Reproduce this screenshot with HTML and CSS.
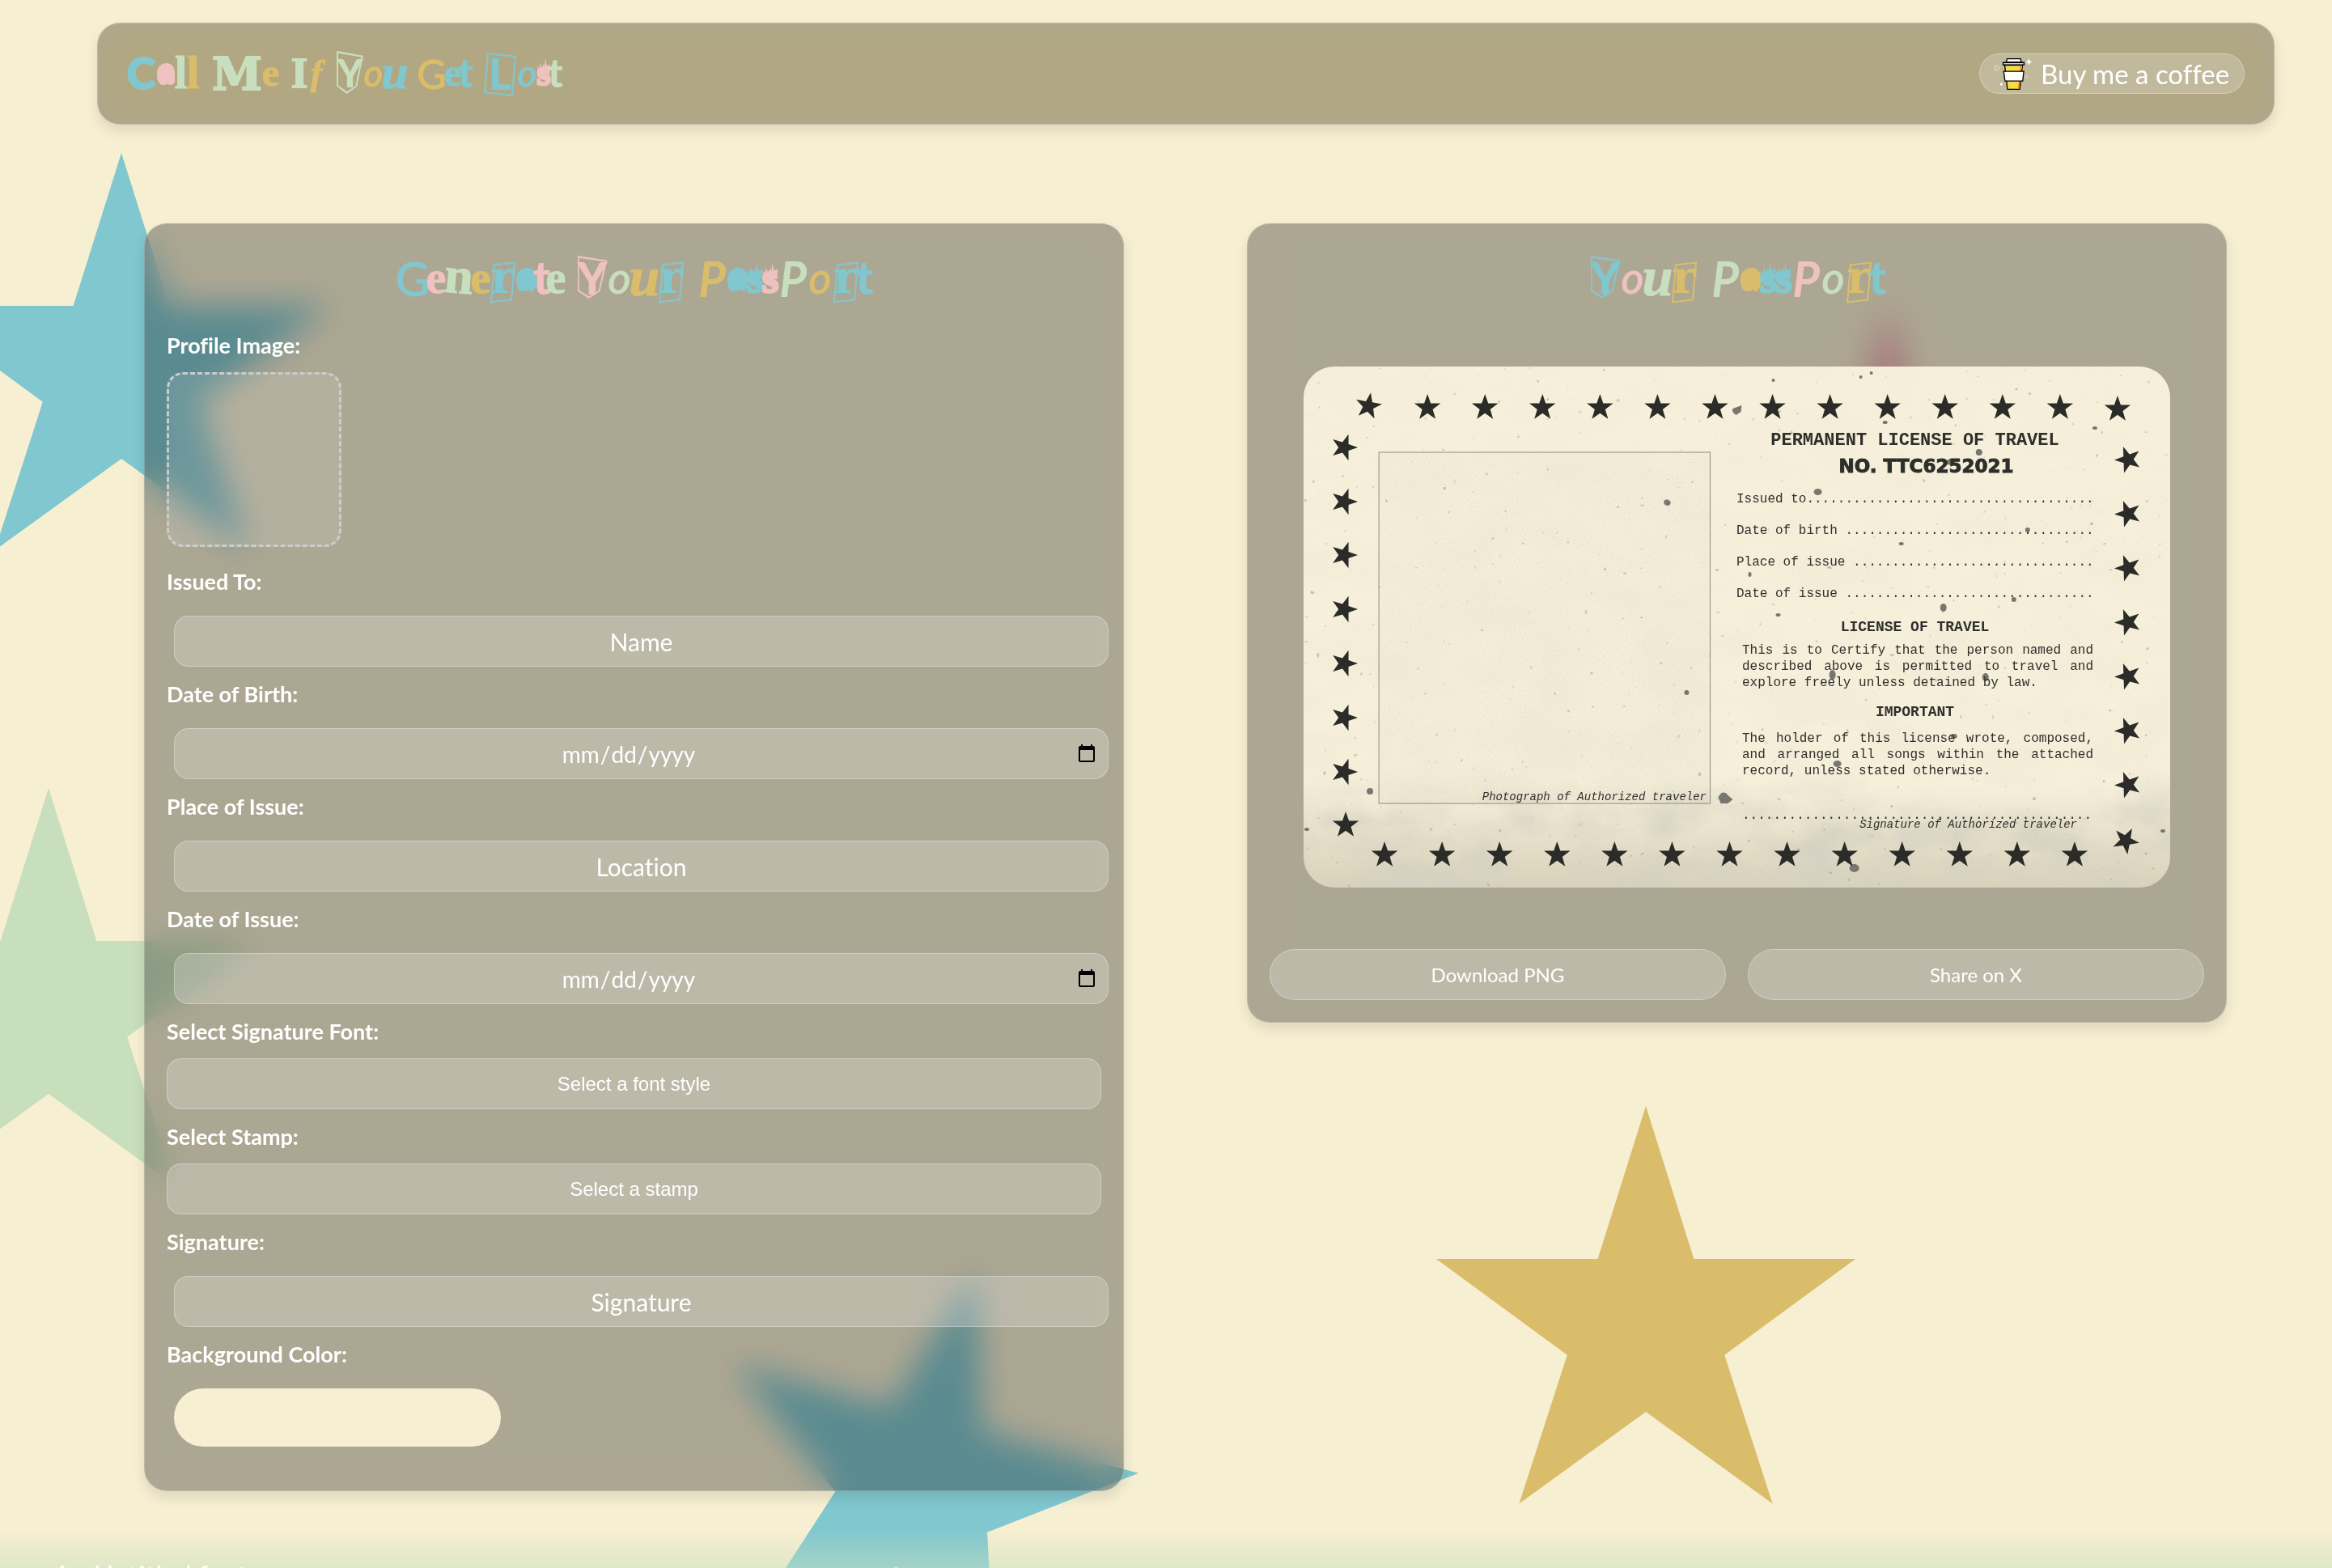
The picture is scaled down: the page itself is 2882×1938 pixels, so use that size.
FILE: index.html
```html
<!DOCTYPE html>
<html lang="en">
<head>
<meta charset="utf-8">
<title>Call Me If You Get Lost</title>
<link rel="stylesheet" href="styles.css">
</head>
<body>
<div class="page">
  <div class="backdrop" aria-hidden="true">
    <i class="star star-blue"></i>
    <i class="star star-green"></i>
    <i class="star star-pink"></i>
    <i class="star star-gold"></i>
    <i class="star star-tilted"></i>
  </div>

  <header class="navbar">
    <h1 class="ransom ransom-nav">
      <span class="word"><span class="l-c blue">C</span><span class="l-a pink">a</span><span class="l-l green">l</span><span class="l-l gold">l</span></span>
      <span class="word"><span class="l-m green">M</span><span class="l-e gold">e</span></span>
      <span class="word"><span class="l-i green">I</span><span class="l-f gold">f</span></span>
      <span class="word"><span class="l-y green">Y</span><span class="l-o gold">o</span><span class="l-u blue">u</span></span>
      <span class="word"><span class="l-g gold">G</span><span class="l-e blue">e</span><span class="l-t blue">t</span></span>
      <span class="word"><span class="l-lb blue">L</span><span class="l-o blue">o</span><span class="l-s pink">s</span><span class="l-t green">t</span></span>
    </h1>
    <a class="coffee" href="#coffee">
      <svg class="cup" viewBox="190 145 145 125" aria-hidden="true">
        <circle cx="204" cy="187" r="8" fill="none" stroke="#d3ccb6" stroke-width="7"/>
        <circle cx="317" cy="219" r="5" fill="#d3ccb6"/>
        <circle cx="221" cy="247" r="5" fill="#fff"/>
        <path d="M324 155v18M315 164h18" stroke="#fff" stroke-width="6"/>
        <path d="M234 176h66l-10 90h-46z" fill="#f9dc45" stroke="#000" stroke-width="4"/>
        <path d="M292 178h7l-3 22h-7zM286 236h5l-4 28h-5z" fill="#f2902f"/>
        <path d="M230 199h75l-4 36h-66z" fill="#fff" stroke="#000" stroke-width="4"/>
        <path d="M243 152h50l3 13h-57z" fill="#fff" stroke="#000" stroke-width="4"/>
        <path d="M228 166h78v9h-78z" fill="#ccc" stroke="#000" stroke-width="4"/>
      </svg>
      <span>Buy me a coffee</span>
    </a>
  </header>

  <main class="columns">
    <form class="card form">
      <h2 class="ransom">
        <span class="word"><span class="l-g blue">G</span><span class="l-e pink">e</span><span class="l-n green">n</span><span class="l-e gold">e</span><span class="l-r blue">r</span><span class="l-a blue">a</span><span class="l-t pink">t</span><span class="l-e green">e</span></span>
        <span class="word"><span class="l-y pink">Y</span><span class="l-o green">o</span><span class="l-u gold">u</span><span class="l-r blue">r</span></span>
        <span class="word"><span class="l-p gold">P</span><span class="l-a blue">a</span><span class="l-s blue">s</span><span class="l-s pink">s</span><span class="l-p green">P</span><span class="l-o gold">o</span><span class="l-r blue">r</span><span class="l-t blue">t</span></span>
      </h2>
      <div class="field field-photo">
        <label for="photo">Profile Image:</label>
        <input class="drop" id="photo" type="file" accept="image/*">
      </div>
      <div class="field">
        <label for="name">Issued To:</label>
        <input class="control" id="name" type="text" placeholder="Name">
      </div>
      <div class="field">
        <label for="birth">Date of Birth:</label>
        <input class="control" id="birth" type="date">
      </div>
      <div class="field">
        <label for="place">Place of Issue:</label>
        <input class="control" id="place" type="text" placeholder="Location">
      </div>
      <div class="field">
        <label for="issued">Date of Issue:</label>
        <input class="control" id="issued" type="date">
      </div>
      <div class="field">
        <label for="font">Select Signature Font:</label>
        <select class="picker" id="font"><option>Select a font style</option></select>
      </div>
      <div class="field">
        <label for="stamp">Select Stamp:</label>
        <select class="picker" id="stamp"><option>Select a stamp</option></select>
      </div>
      <div class="field">
        <label for="sign">Signature:</label>
        <input class="control" id="sign" type="text" placeholder="Signature">
      </div>
      <div class="field">
        <label for="color">Background Color:</label>
        <input class="swatch" id="color" type="color" value="#f7efd2">
      </div>
    </form>

    <section class="card">
      <h2 class="ransom">
        <span class="word"><span class="l-y blue">Y</span><span class="l-o pink">o</span><span class="l-u green">u</span><span class="l-r gold">r</span></span>
        <span class="word"><span class="l-p green">P</span><span class="l-a gold">a</span><span class="l-s blue">s</span><span class="l-s blue">s</span><span class="l-p pink">P</span><span class="l-o green">o</span><span class="l-r gold">r</span><span class="l-t blue">t</span></span>
      </h2>
      <article class="passport">
        <svg class="paper" viewBox="0 0 1070 644" preserveAspectRatio="none" aria-hidden="true">
          <defs>
            <path id="s" d="M0-17L4-5.500H16.200L6.500 2L10 13.800L0 6.800L-10 13.800L-6.500 2L-16.200-5.500H-4Z"/>
            <linearGradient id="fade" x1="0" y1="0" x2="0" y2="1">
              <stop offset="0" stop-color="#fff" stop-opacity=".04"/>
              <stop offset=".78" stop-color="#fff" stop-opacity=".1"/>
              <stop offset=".88" stop-color="#fff" stop-opacity=".8"/>
              <stop offset="1" stop-color="#fff"/>
            </linearGradient>
            <linearGradient id="bottom" x1="0" y1="0" x2="0" y2="1">
              <stop offset=".8" stop-color="#b5ae94" stop-opacity="0"/>
              <stop offset="1" stop-color="#b5ae94" stop-opacity=".45"/>
            </linearGradient>
            <mask id="low"><rect width="1070" height="644" fill="url(#fade)"/></mask>
            <filter id="smudge" x="0" y="0" width="1" height="1">
              <feTurbulence type="fractalNoise" baseFrequency=".012 .018" numOctaves="5" seed="8"/>
              <feColorMatrix values="0 0 0 0 .66  0 0 0 0 .64  0 0 0 0 .54  2.4 0 0 0 -.9"/>
            </filter>
            <filter id="grain" x="0" y="0" width="1" height="1">
              <feTurbulence type="fractalNoise" baseFrequency=".5" numOctaves="2" seed="3"/>
              <feColorMatrix values="0 0 0 0 .5  0 0 0 0 .48  0 0 0 0 .38  .5 0 0 0 -.16"/>
            </filter>
            <filter id="specks" x="0" y="0" width="1" height="1">
              <feTurbulence type="fractalNoise" baseFrequency=".13" numOctaves="2" seed="21"/>
              <feColorMatrix values="0 0 0 0 .3  0 0 0 0 .3  0 0 0 0 .32  9 0 0 0 -6.900"/>
            </filter>
          </defs>
          <rect width="1070" height="644" fill="#f6efda"/>
          <rect width="1070" height="644" fill="url(#bottom)"/>
          <g mask="url(#low)"><rect width="1070" height="644" filter="url(#smudge)"/></g>
          <rect x="93" y="106" width="409" height="434" filter="url(#grain)" opacity=".6"/>
          <rect width="1070" height="644" filter="url(#specks)" opacity=".6"/>
          <rect x="93" y="106" width="409" height="434" fill="none" stroke="#8f8b7b"/>
          <g fill="#77776f">
            <path d="M445 166q4-4 8 1q1 5-4 5q-5-1-4-6zM530 52l11-4-1 8-6 4q-6-4-4-8z"/>
            <path d="M512 532l4-5q5-2 8 3l6 5-6 5-9 0z"/><ellipse cx="82" cy="525" rx="4" ry="4"/>
            <ellipse cx="635" cy="155" rx="5" ry="4"/><ellipse cx="799" cy="118" rx="5" ry="4"/>
            <ellipse cx="834" cy="106" rx="4" ry="4"/><ellipse cx="653" cy="381" rx="4" ry="6"/>
            <ellipse cx="842" cy="384" rx="4" ry="5"/><ellipse cx="790" cy="298" rx="4" ry="5"/>
            <ellipse cx="877" cy="288" rx="3" ry="3"/><ellipse cx="659" cy="491" rx="5" ry="4"/>
            <ellipse cx="680" cy="620" rx="6" ry="5"/><ellipse cx="803" cy="457" rx="4" ry="3"/>
            <ellipse cx="473" cy="403" rx="3" ry="3"/><ellipse cx="718" cy="69" rx="3" ry="2"/>
            <ellipse cx="894" cy="202" rx="3" ry="3"/><ellipse cx="551" cy="257" rx="2" ry="3"/>
            <ellipse cx="738" cy="219" rx="3" ry="2"/><ellipse cx="1061" cy="574" rx="3" ry="2"/>
            <ellipse cx="4" cy="572" rx="3" ry="2"/><ellipse cx="977" cy="76" rx="3" ry="2"/>
            <ellipse cx="688" cy="13" rx="2" ry="2"/><ellipse cx="701" cy="8" rx="2" ry="2"/>
            <ellipse cx="580" cy="17" rx="2" ry="2"/><ellipse cx="586" cy="307" rx="3" ry="2"/>
          </g>
          <g fill="#2b2b28">
            <use href="#s" transform="translate(80 49) rotate(10)"/>
            <use href="#s" x="153" y="51"/><use href="#s" x="224" y="51"/><use href="#s" x="295" y="51"/><use href="#s" x="366" y="51"/><use href="#s" x="437" y="51"/><use href="#s" x="508" y="51"/><use href="#s" x="579" y="51"/><use href="#s" x="650" y="51"/><use href="#s" x="721" y="51"/><use href="#s" x="792" y="51"/><use href="#s" x="863" y="51"/><use href="#s" x="934" y="51"/><use href="#s" x="1005" y="53"/>
            <use href="#s" transform="translate(50 100) rotate(90)"/><use href="#s" transform="translate(50 167) rotate(90)"/><use href="#s" transform="translate(50 233) rotate(90)"/><use href="#s" transform="translate(50 300) rotate(90)"/><use href="#s" transform="translate(50 367) rotate(90)"/><use href="#s" transform="translate(50 434) rotate(90)"/><use href="#s" transform="translate(50 501) rotate(90)"/><use href="#s" x="52" y="567"/>
            <use href="#s" transform="translate(1018 115) rotate(-92)"/><use href="#s" transform="translate(1018 182) rotate(-92)"/><use href="#s" transform="translate(1018 249) rotate(-92)"/><use href="#s" transform="translate(1018 316) rotate(-92)"/><use href="#s" transform="translate(1018 383) rotate(-92)"/><use href="#s" transform="translate(1018 450) rotate(-92)"/><use href="#s" transform="translate(1018 517) rotate(-92)"/><use href="#s" transform="translate(1015 586) rotate(28)"/>
            <use href="#s" x="100" y="604"/><use href="#s" x="171" y="604"/><use href="#s" x="242" y="604"/><use href="#s" x="313" y="604"/><use href="#s" x="384" y="604"/><use href="#s" x="455" y="604"/><use href="#s" x="526" y="604"/><use href="#s" x="597" y="604"/><use href="#s" x="668" y="604"/><use href="#s" x="739" y="604"/><use href="#s" x="810" y="604"/><use href="#s" x="881" y="604"/><use href="#s" x="952" y="604"/>
          </g>
        </svg>
        <p class="photo-note">Photograph of Authorized traveler</p>
        <div class="license">
          <h3 class="license-title">PERMANENT LICENSE OF TRAVEL</h3>
          <p class="license-no">NO. TTC6252021</p>
          <p class="entry">Issued to.....................................</p>
          <p class="entry">Date of birth ................................</p>
          <p class="entry">Place of issue ...............................</p>
          <p class="entry">Date of issue ................................</p>
          <h4 class="clause-title">LICENSE OF TRAVEL</h4>
          <p class="clause">This is to Certify that the person named and described above is permitted to travel and explore freely unless detained by law.</p>
          <h4 class="clause-title clause-second">IMPORTANT</h4>
          <p class="clause clause-last">The holder of this license wrote, composed, and arranged all songs within the attached record, unless stated otherwise.</p>
          <p class="sign-line">.............................................</p>
          <p class="sign-note">Signature of Authorized traveler</p>
        </div>
      </article>
      <div class="actions">
        <button type="button">Download PNG</button>
        <button type="button">Share on X</button>
      </div>
    </section>
  </main>

  <footer class="footer"><p>An Untitled font</p></footer>
</div>
</body>
</html>
```
FILE: styles.css
```css
* { box-sizing: border-box; }

:root {
  --cream: #f7efd2;
  --blue: #81c7cf;
  --pink: #efc1c0;
  --green: #c8dfbd;
  --gold: #dabd6a;
  --glass: rgba(255, 255, 255, .2);
}

body {
  margin: 0; background: var(--cream); color: #fff;
  font-family: Lato, sans-serif; font-variant-ligatures: none;
}
h1, h2, h3, h4, p { margin: 0; font-weight: normal; }

.page { position: relative; height: 100vh; overflow: hidden auto; scrollbar-width: none; }

/* Stars scattered behind the page */
.backdrop { position: absolute; inset: 0; overflow: hidden; }
.star {
  position: absolute; width: 540px; height: 540px;
  clip-path: polygon(50% 0, 61% 35%, 98% 35%, 68% 57%, 79% 91%, 50% 70%, 21% 91%, 32% 57%, 2% 35%, 39% 35%);
}
.star-blue { left: -120px; top: 189px; background: var(--blue); }
.star-green { left: -210px; top: 974px; background: var(--green); }
.star-pink { left: 2063px; top: 378px; background: #efaeb4; }
.star-gold { left: 1764px; top: 1367px; background: var(--gold); }
.star-tilted { left: 866px; top: 1562px; background: var(--blue); transform: rotate(15deg); }

/* Header */
.navbar {
  position: relative; display: flex; align-items: center; justify-content: space-between;
  height: 126px; margin: 28px 71px 0 120px; padding: 0 36px 0 34px;
  border: 1px solid rgba(255, 255, 255, .2); border-radius: 28px;
  background: rgba(0, 0, 0, .3); backdrop-filter: blur(20px) saturate(180%);
  box-shadow: 0 8px 16px rgba(0, 0, 0, .1);
}
.coffee {
  display: flex; align-items: center; gap: 11px; width: 328px; height: 50px; padding-left: 16px;
  border: 1px solid rgba(255, 255, 255, .3); border-radius: 25px;
  background: var(--glass); color: #fff; font-size: 33px; line-height: 44px;
  text-decoration: none; white-space: nowrap;
}
.cup { width: 48px; height: 42px; }

/* Cut-out lettering */
.ransom { display: flex; justify-content: center; gap: 16px; height: 80px; font-size: 58px; line-height: 80px; }
.word { display: flex; }
.word span { position: relative; display: flex; justify-content: center; white-space: nowrap; }
.blue { color: var(--blue); }
.pink { color: var(--pink); }
.green { color: var(--green); }
.gold { color: var(--gold); }
.word .l-g { width: 37px; font-family: Lato, sans-serif; -webkit-text-stroke: 1px currentColor; }
.word .l-e { width: 21px; font: bold 56px/78px "Liberation Serif", serif; -webkit-text-stroke: 1px currentColor; }
.word .l-n { width: 34px; font: bold 64px/74px "Liberation Serif", serif; transform: rotate(5deg); -webkit-text-stroke: 1px currentColor; }
.word .l-r { width: 33px; font: bold 56px/76px "DejaVu Serif", serif; }
.word .l-a { width: 25px; font: 900 46px/78px Lato, sans-serif; }
.word .l-t { width: 14px; font: 900 58px/76px Lato, sans-serif; }
.word .l-y { width: 37px; font: 900 56px/78px Lato, sans-serif; }
.word .l-o { width: 30px; font: italic 54px/78px Lato, sans-serif; -webkit-text-stroke: 1px currentColor; }
.word .l-u { width: 32px; font: italic bold 68px/76px "Liberation Serif", serif; -webkit-text-stroke: 1px currentColor; }
.word .l-p { width: 37px; font: italic 58px/80px Lato, sans-serif; -webkit-text-stroke: 2px currentColor; }
.word .l-s { width: 19px; font: bold 52px/80px "Liberation Serif", serif; -webkit-text-stroke: 3px currentColor; }
.l-r::before, .l-lb::before {
  content: ""; position: absolute; inset: 21px 3px 11px 3px;
  border: 2px solid currentColor; transform: skew(-5deg, -6deg);
}
.l-y::before {
  content: ""; position: absolute; inset: 12px 0 15px 0; background: currentColor;
  clip-path: polygon(0 0, 100% 11%, 76% 83%, 38% 100%, 0 82%, 0 0, 6% 5%, 6% 80%, 39% 95%, 71% 81%, 92% 14%, 6% 5%);
}
.l-a::before {
  content: ""; position: absolute; inset: 27px 0 27px 0; background: currentColor;
  border-radius: 14px 12px 4px 10px;
}
/* Flames over the letter */
.l-s::before {
  content: ""; position: absolute; inset: 21px 0 40px 0; background: currentColor;
  clip-path: polygon(5% 100%, 2% 50%, 18% 70%, 20% 30%, 38% 65%, 50% 30%, 58% 55%, 62% 0, 74% 50%, 100% 40%, 90% 100%);
}

.ransom-nav { gap: 15px; font-size: 50px; }
.ransom-nav .l-c { width: 39px; font: 900 54px/78px Lato, sans-serif; -webkit-text-stroke: 2px currentColor; }
.ransom-nav .l-a { width: 22px; font-size: 38px; }
.ransom-nav .l-l { width: 15px; font: bold 56px/78px "Liberation Serif", serif; -webkit-text-stroke: 1px currentColor; }
.ransom-nav .l-m { width: 64px; font: bold 56px/80px "DejaVu Serif", serif; -webkit-text-stroke: 2px currentColor; }
.ransom-nav .l-e { width: 19px; font-size: 48px; }
.ransom-nav .l-i { width: 22px; font: bold 52px/80px "Liberation Serif", serif; -webkit-text-stroke: 2px currentColor; }
.ransom-nav .l-f { width: 20px; font: italic bold 44px/80px "Liberation Serif", serif; -webkit-text-stroke: 1px currentColor; }
.ransom-nav .l-y { width: 33px; font-size: 48px; }
.ransom-nav .l-o { width: 25px; font-size: 46px; }
.ransom-nav .l-u { width: 28px; font-size: 60px; }
.ransom-nav .l-g { width: 33px; }
.ransom-nav .l-t { width: 13px; font-size: 50px; }
.ransom-nav .l-lb { width: 42px; font: 900 54px/80px Lato, sans-serif; }
.ransom-nav .l-s { width: 16px; font-size: 44px; }
.ransom-nav .l-lb::before { inset: 16px 3px 14px 3px; transform: skew(-5deg, 6deg); }

/* Two-card layout */
.columns {
  display: grid; grid-template-columns: 1fr 1fr; align-items: start; gap: 152px;
  margin: 122px 130px 0 178px;
}
.card {
  position: relative; padding: 27px;
  border: 1px solid rgba(255, 255, 255, .2); border-radius: 28px;
  background: rgba(0, 0, 0, .3); backdrop-filter: blur(20px);
  box-shadow: 0 8px 16px rgba(0, 0, 0, .1);
}
.form { padding-bottom: 54px; }
.form .ransom { margin-bottom: 25px; }

.field { display: flex; flex-direction: column; margin-bottom: 16px; }
.field:last-child { margin-bottom: 0; }
.field-photo { margin-bottom: 25px; }
.field label { margin-bottom: 15px; font-size: 27px; font-weight: bold; line-height: 36px; }
.drop {
  width: 216px; height: 216px; border: 3px dashed #ccc; border-radius: 20px;
  background: rgba(255, 255, 255, .1); color: transparent; font-size: 0;
}
.drop::file-selector-button { display: none; }
.control, .picker {
  width: 100%; height: 63px; border: 1px solid rgba(255, 255, 255, .3); border-radius: 18px;
  background: var(--glass); color: #fff; text-align: center;
}
.control { margin: 9px 0 0 9px; padding: 0 13px; font: 30px Lato, sans-serif; font-variant-ligatures: none; }
.control::placeholder { color: #fff; opacity: 1; }
.control[type="date"] { padding-left: 8px; font-size: 28px; }
.control::-webkit-calendar-picker-indicator { width: 26px; height: 26px; padding: 0; }
.picker { appearance: none; font: 24px "Liberation Sans", sans-serif; text-align-last: center; }
.picker option { color: #222; }
.swatch {
  width: 404px; height: 72px; margin: 9px 0 0 9px; padding: 0; overflow: hidden;
  border: 0; border-radius: 36px; background: var(--cream);
}
.swatch::-webkit-color-swatch-wrapper { padding: 0; }
.swatch::-webkit-color-swatch { border: 0; }

/* Passport preview */
.passport {
  position: relative; display: flex; justify-content: space-between;
  height: 644px; margin: 69px 42px 76px; padding: 79px 95px 0 93px;
  border-radius: 38px; overflow: hidden; color: #2e2e2b;
  font: bold 16px/20px "Liberation Mono", monospace;
}
.paper { position: absolute; inset: 0; width: 100%; height: 100%; }
.passport p, .license { position: relative; }
.photo-note { width: 405px; padding-top: 443px; font-size: 14px; font-style: italic; text-align: right; }
.license { width: 441px; }
.license-title { font-size: 22px; font-weight: bold; line-height: 26px; text-align: center; }
.license-no { margin-top: 3px; padding-left: 28px; font: bold 23px/30px "DejaVu Sans", sans-serif; text-align: center; -webkit-text-stroke: 1px currentColor; }
.entry { margin-bottom: 19px; white-space: pre; }
.license-no + .entry { margin-top: 16px; }
.clause-title { margin-top: 2px; font-size: 18px; font-weight: bold; line-height: 24px; text-align: center; }
.clause { margin: 7px 0 0 7px; text-align: justify; }
.clause-second { margin-top: 14px; }
.clause-last { margin-top: 11px; }
.sign-line { margin: 35px 0 0 7px; }
.sign-note { margin-top: -6px; padding-right: 20px; font-size: 14px; font-style: italic; line-height: 14px; text-align: right; }

.actions { display: grid; grid-template-columns: 1fr 1fr; gap: 27px; }
.actions button {
  height: 63px; border: 1px solid rgba(255, 255, 255, .3); border-radius: 32px;
  background: var(--glass); color: #fff; font: 24px Lato, sans-serif;
}

/* Footer */
.footer {
  position: relative; margin-top: 47px; padding: 36px 64px 40px;
  background: linear-gradient(rgba(200, 223, 189, 0), rgba(200, 223, 189, .5) 48px, var(--green));
  font: italic 36px/44px Lato, sans-serif;
}
```
